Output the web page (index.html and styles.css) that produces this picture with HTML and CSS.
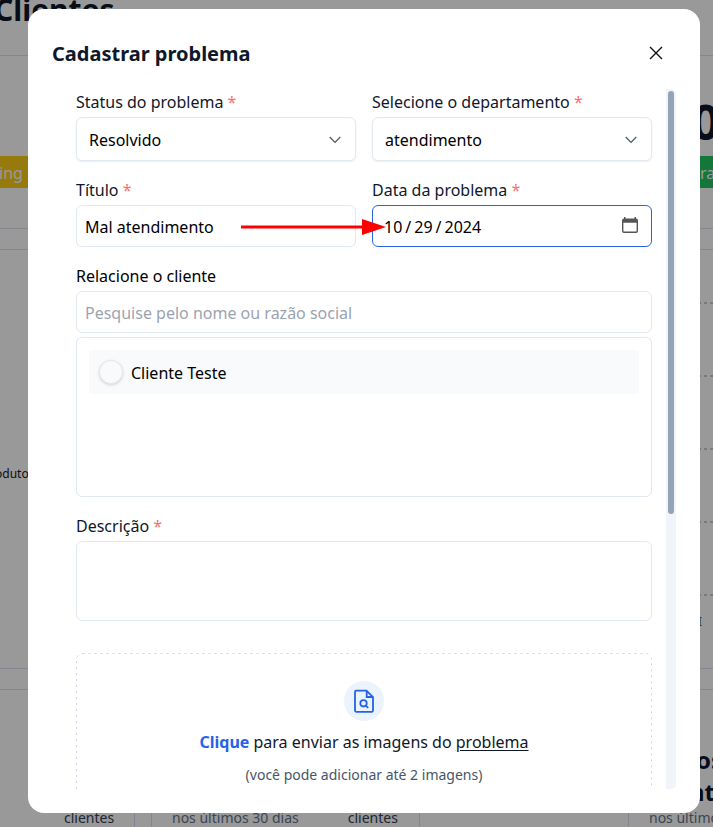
FILE: index.html
```html
<!DOCTYPE html>
<html lang="pt-BR">
<head>
<meta charset="utf-8">
<title>Clientes</title>
<link rel="stylesheet" href="styles.css">
</head>
<body>
<main class="page">
  <header class="page-head"><h1>Clientes</h1></header>
  <section class="panel summary">
    <div class="number">0</div>
    <div class="tags"><span class="tag yellow">ing</span><span class="tag green">ra</span></div>
  </section>
  <section class="panel chart">
    <span class="chart-label">oduto</span>
    <div class="gridlines"><i></i><i></i><i></i><i></i><i></i><span class="tick">I</span></div>
  </section>
  <section class="bottom">
    <div class="panel stat first"><span class="dark">clientes</span></div>
    <div class="panel stat second"><span>nos últimos 30 dias</span><span class="dark">clientes</span></div>
    <div class="panel stat third"><h2><span>os</span><span class="line-two">nt</span></h2><span>nos últimos</span></div>
  </section>
</main>
<div class="overlay">
  <div class="modal">
    <div class="modal-head">
      <h2>Cadastrar problema</h2>
      <svg class="close" viewBox="0 0 14 14"><path d="M1 1l12 12M13 1L1 13"/></svg>
    </div>
    <div class="modal-body">
      <form class="form">
        <div class="row">
          <div class="field">
            <label>Status do problema <b>*</b></label>
            <div class="box select"><span>Resolvido</span><svg class="chevron" viewBox="0 0 12 8"><path d="M.7 1L6 6.4 11.3 1"/></svg></div>
          </div>
          <div class="field">
            <label>Selecione o departamento <b>*</b></label>
            <div class="box select"><span>atendimento</span><svg class="chevron" viewBox="0 0 12 8"><path d="M.7 1L6 6.4 11.3 1"/></svg></div>
          </div>
        </div>
        <div class="row">
          <div class="field">
            <label>Título <b>*</b></label>
            <div class="box input">Mal atendimento</div>
            <svg class="arrow" viewBox="0 0 146 18"><path d="M0 9h124" stroke="#f00" stroke-width="3"/><path d="M121 1l24 8-24 8z" fill="#f00"/></svg>
          </div>
          <div class="field">
            <label>Data da problema <b>*</b></label>
            <div class="box date"><span class="date-value"><span>10</span><span>/</span><span>29</span><span>/</span><span>2024</span></span>
              <svg class="calendar" viewBox="0 0 16 16"><path d="M2 1.500V0h1.500v1.500h9V0H14v1.500a2 2 0 0 1 2 2V14a2 2 0 0 1-2 2H2a2 2 0 0 1-2-2V3.500a2 2 0 0 1 2-2zM1.400 5.800v7.900q0 .9.9.9h11.400q.9 0 .9-.9V5.800z"/></svg>
            </div>
          </div>
        </div>
        <div class="field">
          <label class="black">Relacione o cliente</label>
          <div class="box input placeholder">Pesquise pelo nome ou razão social</div>
          <div class="box list"><div class="option"><span class="radio"></span><span>Cliente Teste</span></div></div>
        </div>
        <div class="field">
          <label>Descrição <b>*</b></label>
          <div class="box textarea"></div>
        </div>
        <div class="dropzone">
          <svg class="dash" width="576" height="180"><rect x=".5" y=".5" width="575" height="178" rx="6"/></svg>
          <span class="upload"><svg viewBox="0 0 24 24"><path d="M14.500 1.700H4.200A1.200 1.200 0 0 0 3 2.900v18.700a1.200 1.200 0 0 0 1.200 1.200h15.600a1.200 1.200 0 0 0 1.200-1.200V8.200zM14.700 2v6h6"/><circle cx="11.500" cy="14.300" r="3.200"/><path d="M13.800 16.600l2.400 2.300"/></svg></span>
          <p class="lead"><strong>Clique</strong> para enviar as imagens do <u>problema</u></p>
          <p class="hint">(você pode adicionar até 2 imagens)</p>
        </div>
      </form>
      <div class="track"><div class="thumb"></div></div>
    </div>
  </div>
</div>
</body>
</html>
```
FILE: styles.css
```css
* { box-sizing: border-box; }
body {
  margin: 0;
  height: 827px;
  overflow: hidden;
  font: 16px/24px "Noto Sans", sans-serif;
  color: #0f172a;
  background: #fff;
}
h1, h2, p { margin: 0; }

.page { height: 827px; overflow: hidden; }
.page-head { display: flow-root; height: 56px; border-bottom: 1px solid #dbe0ea; }
.page-head h1 { font-size: 30px; line-height: 36px; margin: -8px 0 0 -6px; }
.panel { border: 1px solid #dbe0ea; border-width: 1px 0; }
.summary { height: 173px; border-top: 0; padding-top: 36px; }
.number { font-size: 48px; line-height: 60px; font-weight: 700; padding-left: 692px; height: 64px; }
.tags { display: flex; justify-content: space-between; }
.tag { height: 32px; line-height: 34px; color: #fff; white-space: nowrap; }
.yellow { width: 340px; background: #facc15; text-indent: -1px; }
.green { width: 13px; background: #22c55e; box-shadow: -20px 0 #22c55e; }
.chart { height: 420px; margin-top: 20px; display: flex; justify-content: space-between; }
.chart-label { font-size: 12px; line-height: 18px; margin: 215px 0 0 -5px; }
.gridlines { width: 15px; padding-top: 52px; }
.gridlines i { display: block; height: 73px; background: repeating-linear-gradient(90deg, #ccc 0 3px, transparent 3px 6px) 0 0 / 100% 2px no-repeat; }
.tick { display: block; font-size: 12px; line-height: 14px; margin-top: -52px; color: #666; }
.bottom { display: flex; margin-top: 20px; height: 180px; }
.stat { flex: none; border-width: 1px; color: #64748b; font-size: 14px; line-height: 20px; padding-top: 118px; }
.stat .dark { color: #334155; }
.first { width: 135px; border-left: 0; padding-left: 64px; }
.second { width: 269px; margin-left: 16px; padding-left: 20px; display: flex; gap: 49px; white-space: nowrap; }
.third { width: 280px; margin-left: 208px; padding: 54px 0 0 20px; white-space: nowrap; }
.third h2 { font-size: 24px; line-height: 32px; padding-left: 47px; color: #0f172a; }
.third h2 span { display: block; }
.third .line-two { margin-left: -7px; }

.overlay { position: absolute; inset: 0; padding: 9px 13px 14px 28px; background: rgba(0, 0, 0, .4); }
.modal { height: 804px; border-radius: 16px; padding: 24px; background: #fff; }
.modal-head { height: 56px; display: flex; justify-content: space-between; padding: 8px 13px 0 0; }
.modal-head h2 { font-size: 20px; line-height: 26px; }
.close { width: 14px; height: 14px; margin-top: 5px; fill: none; stroke: #111; stroke-width: 1.4; }
.modal-body { height: 700px; display: flex; justify-content: space-between; overflow: hidden; }
.form { width: 576px; margin-left: 24px; flex: none; display: flex; flex-direction: column; gap: 16px; }
.row { display: grid; grid-template-columns: 280px 280px; gap: 16px; }
.field { position: relative; }
label { display: block; height: 28px; padding-top: 1px; }
label b { color: #f87171; font-weight: 400; }
label.black { color: #000; }
.box { border: 1px solid #e2e8f0; border-radius: 6px; color: #000; background: #fff; }
.select {
  height: 44px; padding: 0 14px 0 12px;
  display: flex; align-items: center; justify-content: space-between;
  box-shadow: 0 1px 2px rgba(0, 0, 0, .07);
}
.select span { padding-top: 2px; }
.chevron { width: 12px; height: 8px; margin-top: 1px; fill: none; stroke: #4b5563; stroke-width: 1.2; }
.input { height: 42px; padding: 9px 8px 0; }
.placeholder { color: #9ca3af; }
.date {
  height: 42px; padding: 0 13px 0 11px; border-color: #2563eb;
  display: flex; align-items: center; justify-content: space-between;
}
.date-value { display: flex; gap: 3px; padding-top: 1px; }
.calendar { width: 16px; height: 16px; margin-top: -2px; fill: #555; fill-rule: evenodd; }
.arrow { position: absolute; left: 165px; top: 41px; width: 146px; height: 18px; z-index: 2; }
.list { height: 160px; margin-top: 4px; padding: 12px; }
.option { height: 44px; display: flex; align-items: center; gap: 8px; padding-left: 10px; border-radius: 2px; background: #f8fafc; padding-top: 2px; }
.radio {
  width: 24px; height: 24px; border-radius: 50%; border: 1px solid #e5e7eb; background: #f8fafc;
  box-shadow: 0 1px 3px rgba(0, 0, 0, .16); margin-top: -2px;
}
.textarea { height: 80px; }
.dropzone {
  position: relative; height: 180px; margin-top: 16px; padding-top: 28px;
  display: flex; flex-direction: column; align-items: center;
}
.dash { position: absolute; left: 0; top: 0; fill: none; stroke: #cbd5e1; stroke-dasharray: 2 4; }
.upload { width: 40px; height: 40px; border-radius: 50%; background: #ebf4fd; display: grid; place-items: center; }
.upload svg { width: 24px; height: 24px; fill: none; stroke: #2563eb; stroke-width: 1.8; }
.lead { margin-top: 9px; }
.lead strong { color: #2563eb; }
.lead u { text-underline-offset: 2px; }
.hint { margin-top: 11px; font-size: 14px; line-height: 20px; color: #475569; }
.track { width: 10px; height: 700px; padding: 2px; border-radius: 0 5px 5px 0; background: #f1f5f9; flex: none; }
.thumb { height: 423px; border-radius: 3px; background: #94a3b8; }
```
